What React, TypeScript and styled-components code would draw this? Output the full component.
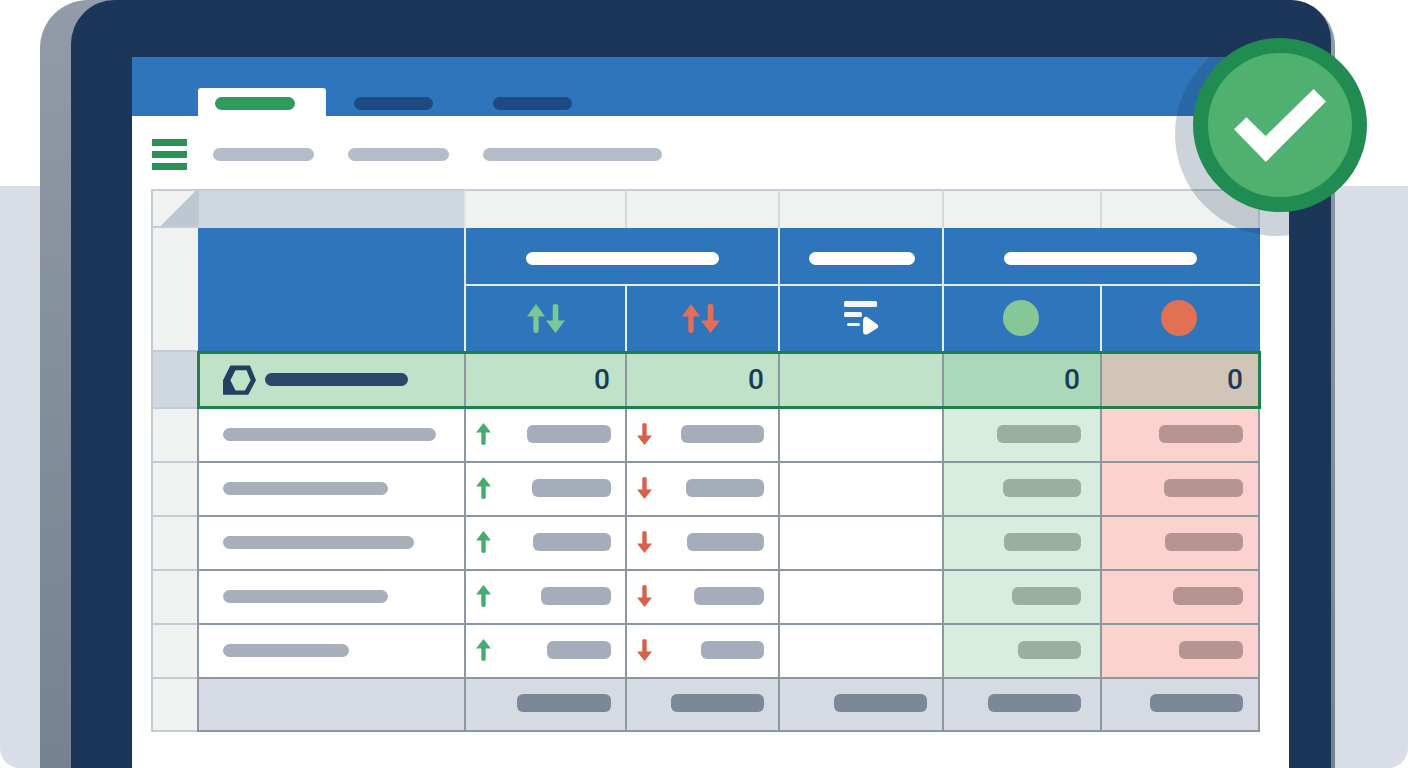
import React from 'react';
import styled, { createGlobalStyle } from 'styled-components';

const COLUMNS = '48px 267px 161px 153px 164px 158px 158px';
const GRID_LINE = '#8c97a4';
const SOFT_LINE = '#c3cbd4';
const SHEET_BLUE = '#2e75bb';
const NAVY = '#1b3658';

const GlobalStyle = createGlobalStyle`
  html, body { margin: 0; padding: 0; background: #ffffff; }
  body { font-family: Roboto, "Liberation Sans", sans-serif; }
`;

const Page = styled.div`
  position: relative;
  width: 1408px;
  height: 768px;
  overflow: hidden;
  border-radius: 0 0 20px 20px;
  background: linear-gradient(to bottom, #ffffff 186px, #d9dee6 186px);
`;

const Device = styled.div`
  box-sizing: border-box;
  width: 1295px;
  height: 768px;
  margin-left: 40px;
  padding: 0 4px 0 31px;
  border-radius: 48px 46px 0 0;
  background: linear-gradient(to bottom, #929ba8, #75828f);
`;

const Bezel = styled.div`
  box-sizing: border-box;
  height: 768px;
  padding: 57px 42px 0 61px;
  border-radius: 44px 40px 0 0;
  background: ${NAVY};
`;

const Screen = styled.div`
  height: 711px;
  background: #ffffff;
`;

const TabBar = styled.div`
  box-sizing: border-box;
  display: flex;
  align-items: flex-end;
  height: 59px;
  padding-left: 66px;
  background: ${SHEET_BLUE};
`;

const Tab = styled.div<{ $active?: boolean }>`
  box-sizing: border-box;
  height: 28px;
  padding: ${(p) => (p.$active ? '9px 31px 0 17px' : '9px 30px 0')};
  margin-right: ${(p) => (p.$active ? '-2px' : '0')};
  border-radius: 3px 3px 0 0;
  background: ${(p) => (p.$active ? '#ffffff' : 'transparent')};
`;

const TabLabel = styled.div<{ $active?: boolean }>`
  width: ${(p) => (p.$active ? '80px' : '79px')};
  height: 13px;
  border-radius: 7px;
  background: ${(p) => (p.$active ? '#2e9a5c' : '#1d4a80')};
`;

const Toolbar = styled.div`
  box-sizing: border-box;
  display: flex;
  align-items: center;
  height: 73px;
  padding: 23px 0 19px 20px;
`;

const MenuIcon = styled.div`
  display: flex;
  flex-direction: column;
  gap: 5px;
  width: 35px;
  margin-right: 26px;
`;

const MenuBar = styled.div`
  height: 7px;
  background: #2a9157;
`;

const ToolbarPill = styled.div<{ $width: number }>`
  width: ${(p) => p.$width}px;
  height: 13px;
  margin-right: 34px;
  border-radius: 7px;
  background: #b4bcc8;
`;

const Sheet = styled.div`
  width: 1109px;
  margin-left: 19px;
`;

const Row = styled.div<{ $height: number }>`
  display: grid;
  grid-template-columns: ${COLUMNS};
  height: ${(p) => p.$height}px;
`;

const BodyRow = styled(Row)`
  & > div {
    padding-bottom: 2px;
  }
`;

const TotalRow = styled(Row)`
  & > div {
    padding-bottom: 3px;
  }
`;

const SelectedRow = styled(Row)`
  position: relative;

  &::after {
    content: '';
    position: absolute;
    top: -1px;
    right: -1px;
    bottom: 0;
    left: 46px;
    border: 3px solid #1f8049;
  }
`;

const Corner = styled.div`
  box-sizing: border-box;
  border: 2px solid ${SOFT_LINE};
  border-right-width: 0;
  background: linear-gradient(135deg, #f0f2f1 53%, #bdc7d2 53%);
`;

const ColumnLetter = styled.div<{ $active?: boolean }>`
  box-sizing: border-box;
  border-top: 2px solid ${SOFT_LINE};
  border-right: 2px solid ${(p) => (p.$active ? '#dfe3e8' : '#d3d8dd')};
  background: ${(p) => (p.$active ? '#cfd7e1' : '#f0f2f1')};
`;

const RowHeader = styled.div<{ $active?: boolean }>`
  box-sizing: border-box;
  border-left: 2px solid ${SOFT_LINE};
  border-bottom: 2px solid ${SOFT_LINE};
  background: ${(p) => (p.$active ? '#cfd7e1' : '#f0f2f1')};
`;

const HeadGrid = styled.div`
  display: grid;
  grid-template-columns: ${COLUMNS};
  grid-template-rows: 58px 66px;
`;

const HeadSpacer = styled(RowHeader)`
  grid-row: span 2;
`;

const HeadCell = styled.div<{ $span?: number; $rows?: number; $noLine?: boolean }>`
  box-sizing: border-box;
  grid-column: span ${(p) => p.$span ?? 1};
  grid-row: span ${(p) => p.$rows ?? 1};
  display: flex;
  align-items: center;
  justify-content: center;
  background: ${SHEET_BLUE};
  border-right: ${(p) => (p.$noLine ? '0' : '2px solid #e4eef7')};
`;

const NameHead = styled(HeadCell)`
  margin-left: -1px;
`;

const IconHead = styled(HeadCell)`
  padding-bottom: 2px;
`;

const GroupCell = styled(HeadCell)`
  padding-top: 5px;
  border-bottom: 2px solid #e4eef7;
`;

const GroupLabel = styled.div<{ $width: number; $shift?: number }>`
  width: ${(p) => p.$width}px;
  height: 13px;
  margin-left: ${(p) => p.$shift ?? 0}px;
  border-radius: 7px;
  background: #ffffff;
`;

const ArrowPair = styled.div<{ $shift?: number }>`
  display: flex;
  gap: 1px;
  margin-left: ${(p) => p.$shift ?? 0}px;
`;

const Dot = styled.div<{ $color: string; $shift?: number }>`
  width: 36px;
  height: 36px;
  margin-left: ${(p) => p.$shift ?? 0}px;
  border-radius: 50%;
  background: ${(p) => p.$color};
`;

type Tone = 'plain' | 'selected' | 'selectedGood' | 'selectedBad' | 'good' | 'bad' | 'total';

const toneColors: Record<Tone, string> = {
  plain: '#ffffff',
  selected: '#c0e2c9',
  selectedGood: '#abd8b8',
  selectedBad: '#d0c5b7',
  good: '#d8ecdf',
  bad: '#fbd2cd',
  total: '#d5dae3',
};

const Cell = styled.div<{ $tone?: Tone; $pad?: number }>`
  box-sizing: border-box;
  display: flex;
  align-items: center;
  justify-content: flex-end;
  padding-right: ${(p) => p.$pad ?? 15}px;
  border-right: 2px solid ${GRID_LINE};
  border-bottom: 2px solid ${GRID_LINE};
  background: ${(p) => toneColors[p.$tone ?? 'plain']};
`;

const NameCell = styled(Cell)`
  justify-content: flex-start;
  padding-left: 24px;
  border-left: 2px solid ${GRID_LINE};
  margin-left: -2px;
`;

const MoveCell = styled(Cell)`
  justify-content: space-between;
  padding-left: 10px;
`;

const Digit = styled.span`
  font-family: Roboto, "Liberation Sans", sans-serif;
  font-size: 28px;
  font-weight: 500;
  line-height: 1;
  color: #1b3a57;
`;

const NamePill = styled.div<{ $width: number; $strong?: boolean }>`
  width: ${(p) => p.$width}px;
  height: 13px;
  border-radius: 7px;
  background: ${(p) => (p.$strong ? '#2a4768' : '#a8afbb')};
`;

const ValuePill = styled.div<{ $width: number; $color: string }>`
  width: ${(p) => p.$width}px;
  height: 18px;
  border-radius: 6px;
  background: ${(p) => p.$color};
`;

const HexIcon = styled.svg`
  flex: none;
  width: 33px;
  height: 30px;
  margin-right: 9px;
`;

const BadgeShadow = styled.div`
  position: absolute;
  top: 32px;
  left: 1175px;
  width: 204px;
  height: 204px;
  border-radius: 50%;
  background: rgba(27, 54, 88, 0.22);
  clip-path: inset(25px 48px 0 0);
`;

const Badge = styled.div`
  position: absolute;
  top: 38px;
  left: 1193px;
  box-sizing: border-box;
  display: flex;
  align-items: center;
  justify-content: center;
  width: 174px;
  height: 174px;
  border: 15px solid #218c51;
  border-radius: 50%;
  background: #4fb06f;
`;

const CheckIcon = styled.svg`
  width: 92px;
  height: 73px;
  margin-top: 1px;
`;

function Arrow({ dir, color, w, h }: { dir: 'up' | 'down'; color: string; w: number; h: number }) {
  return (
    <svg width={w} height={h} viewBox="0 0 15 22" preserveAspectRatio="none">
      <path
        d="M7.5 0 L15 9.5 H9.7 V20.5 a2.2 1.5 0 0 1 -4.4 0 V9.5 H0 Z"
        fill={color}
        transform={dir === 'down' ? 'rotate(180 7.5 11)' : undefined}
      />
    </svg>
  );
}

function FilterIcon() {
  return (
    <svg width="35" height="35" viewBox="0 0 35 35">
      <rect x="0" y="0" width="33" height="6" rx="1.5" fill="#f2f6fb" />
      <rect x="0" y="11" width="18" height="5" rx="1.5" fill="#f2f6fb" />
      <rect x="3" y="22" width="13" height="3" rx="1.5" fill="#f2f6fb" />
      <path d="M23 16 L33.5 23.5 Q35 25.5 33.5 27 L24 33 Q19 35 19 30 L19 20 Q19.5 15 23 16 Z" fill="#ffffff" />
    </svg>
  );
}

const rows = [
  { name: 213, up: 84, down: 83, good: 84, bad: 84 },
  { name: 165, up: 79, down: 78, good: 78, bad: 79 },
  { name: 191, up: 78, down: 77, good: 77, bad: 78 },
  { name: 165, up: 70, down: 70, good: 69, bad: 70 },
  { name: 126, up: 64, down: 63, good: 63, bad: 64 },
];

const totals = [94, 93, 93, 93, 93];

export default function App() {
  return (
    <Page>
      <GlobalStyle />
      <Device>
        <Bezel>
          <Screen>
            <TabBar>
              <Tab $active>
                <TabLabel $active />
              </Tab>
              <Tab>
                <TabLabel />
              </Tab>
              <Tab>
                <TabLabel />
              </Tab>
            </TabBar>

            <Toolbar>
              <MenuIcon>
                <MenuBar />
                <MenuBar />
                <MenuBar />
              </MenuIcon>
              <ToolbarPill $width={101} />
              <ToolbarPill $width={101} />
              <ToolbarPill $width={179} />
            </Toolbar>

            <Sheet>
              <Row $height={39}>
                <Corner />
                <ColumnLetter $active />
                <ColumnLetter />
                <ColumnLetter />
                <ColumnLetter />
                <ColumnLetter />
                <ColumnLetter />
              </Row>

              <HeadGrid>
                <HeadSpacer />
                <NameHead $rows={2} />
                <GroupCell $span={2}>
                  <GroupLabel $width={193} />
                </GroupCell>
                <GroupCell>
                  <GroupLabel $width={106} $shift={2} />
                </GroupCell>
                <GroupCell $span={2} $noLine>
                  <GroupLabel $width={193} $shift={-3} />
                </GroupCell>
                <IconHead>
                  <ArrowPair>
                    <Arrow dir="up" color="#7cc796" w={18} h={29} />
                    <Arrow dir="down" color="#7cc796" w={19} h={29} />
                  </ArrowPair>
                </IconHead>
                <IconHead>
                  <ArrowPair $shift={-4}>
                    <Arrow dir="up" color="#e36f58" w={18} h={29} />
                    <Arrow dir="down" color="#e36f58" w={19} h={29} />
                  </ArrowPair>
                </IconHead>
                <IconHead>
                  <FilterIcon />
                </IconHead>
                <IconHead>
                  <Dot $color="#85c796" $shift={-2} />
                </IconHead>
                <IconHead $noLine>
                  <Dot $color="#e17055" $shift={-4} />
                </IconHead>
              </HeadGrid>

              <SelectedRow $height={57}>
                <RowHeader $active />
                <NameCell $tone="selected">
                  <HexIcon viewBox="250 75 98 88">
                    <path
                      fillRule="evenodd"
                      fill="#22405f"
                      d="M250 120 L272 76 H330 L348 120 L325 163 H250 Z M272 120 L287 90 H320 L332 120 L315 150 H287 Z"
                    />
                  </HexIcon>
                  <NamePill $width={143} $strong />
                </NameCell>
                <Cell $tone="selected" $pad={15}>
                  <Digit>0</Digit>
                </Cell>
                <Cell $tone="selected" $pad={14}>
                  <Digit>0</Digit>
                </Cell>
                <Cell $tone="selected" />
                <Cell $tone="selectedGood" $pad={20}>
                  <Digit>0</Digit>
                </Cell>
                <Cell $tone="selectedBad" $pad={15}>
                  <Digit>0</Digit>
                </Cell>
              </SelectedRow>

              {rows.map((row) => (
                <BodyRow $height={54} key={row.name + row.up}>
                  <RowHeader />
                  <NameCell>
                    <NamePill $width={row.name} />
                  </NameCell>
                  <MoveCell $pad={14}>
                    <Arrow dir="up" color="#46ab6f" w={15} h={22} />
                    <ValuePill $width={row.up} $color="#a6adba" />
                  </MoveCell>
                  <MoveCell $pad={14}>
                    <Arrow dir="down" color="#d9604a" w={15} h={22} />
                    <ValuePill $width={row.down} $color="#a6adba" />
                  </MoveCell>
                  <Cell />
                  <Cell $tone="good" $pad={19}>
                    <ValuePill $width={row.good} $color="#9aaea2" />
                  </Cell>
                  <Cell $tone="bad" $pad={15}>
                    <ValuePill $width={row.bad} $color="#b69491" />
                  </Cell>
                </BodyRow>
              ))}

              <TotalRow $height={53}>
                <RowHeader />
                <NameCell $tone="total" />
                {totals.map((width, i) => (
                  <Cell $tone="total" $pad={i < 2 ? 14 : i === 3 ? 19 : 15} key={i}>
                    <ValuePill $width={width} $color="#7c8798" />
                  </Cell>
                ))}
              </TotalRow>
            </Sheet>
          </Screen>
        </Bezel>
      </Device>

      <BadgeShadow />
      <Badge>
        <CheckIcon viewBox="403 268 274 217">
          <polygon fill="#ffffff" points="403,388 440,352 497,408 640,268 677,305 498,485" />
        </CheckIcon>
      </Badge>
    </Page>
  );
}
